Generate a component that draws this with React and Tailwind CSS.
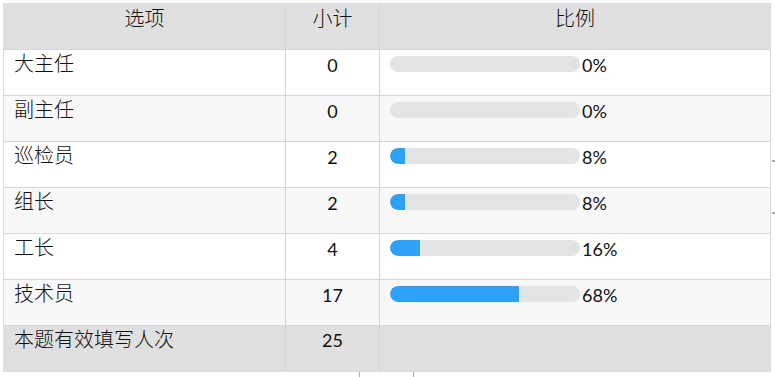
const rows = [
  { name: '大主任', count: 0, pct: 0 },
  { name: '副主任', count: 0, pct: 0 },
  { name: '巡检员', count: 2, pct: 8 },
  { name: '组长', count: 2, pct: 8 },
  { name: '工长', count: 4, pct: 16 },
  { name: '技术员', count: 17, pct: 68 },
]

const cjk = "font-['SimSun','Noto_Sans_CJK_SC',sans-serif] font-light"
const num = "font-['Lato','Liberation_Sans','Noto_Sans_CJK_SC',sans-serif]"

function Bar({ pct }) {
  return (
    <div className="flex items-start pt-[6px] pl-[10px]">
      <div className="w-[190px] h-[16px] rounded-full bg-[#e3e4e5] overflow-hidden">
        <div className="h-full bg-[#2ea1f8] rounded-l-full" style={{ width: `${pct}%` }} />
      </div>
      <span className={`${num} text-[18px] leading-[24px] text-[#111] -mt-[3px] ml-[2px]`}>{pct}%</span>
    </div>
  )
}

export default function App() {
  return (
    <div className="relative w-[775px] h-[377px] bg-white">
      <div className="ml-[3px] pt-[3px] w-[768px]">
        <div className="border border-[#dadada] text-[#111]">
          {/* header */}
          <div className="grid grid-cols-[282px_94px_1fr] h-[46px] bg-[#e0e0e0] border-b border-[#d4d4d4]">
            <div className={`${cjk} text-[20px] leading-[24px] pt-[2px] text-center border-r border-[#d4d4d4]`}>选项</div>
            <div className={`${cjk} text-[20px] leading-[24px] pt-[2px] text-center border-r border-[#d4d4d4]`}>小计</div>
            <div className={`${cjk} text-[20px] leading-[24px] pt-[2px] text-center`}>比例</div>
          </div>
          {rows.map((r, i) => (
            <div
              key={r.name}
              className={`grid grid-cols-[282px_94px_1fr] h-[46px] border-b border-[#d6d6d6] ${i % 2 === 1 ? 'bg-[#f8f8f8]' : 'bg-white'}`}
            >
              <div className={`${cjk} text-[20px] leading-[24px] pt-[1px] pl-[10px] border-r border-[#d6d6d6]`}>{r.name}</div>
              <div className={`${num} text-[18px] leading-[24px] pt-[3px] text-center border-r border-[#d6d6d6]`}>{r.count}</div>
              <Bar pct={r.pct} />
            </div>
          ))}
          {/* footer */}
          <div className="grid grid-cols-[282px_94px_1fr] h-[45px] bg-[#e0e0e0]">
            <div className={`${cjk} text-[20px] leading-[24px] pt-[1px] pl-[10px] border-r border-[#d4d4d4]`}>本题有效填写人次</div>
            <div className={`${num} text-[18px] leading-[24px] pt-[2px] text-center border-r border-[#d4d4d4]`}>25</div>
            <div />
          </div>
        </div>
      </div>
      {/* stray scrollbar fragments */}
      <div className="absolute left-[359px] top-[372px] w-[55px] h-[5px] border-x border-[#aaa]" />
      <div className="absolute left-[772px] top-[160px] w-[3px] h-[2px] bg-[#aaa]" />
      <div className="absolute left-[772px] top-[212px] w-[3px] h-[2px] bg-[#aaa]" />
    </div>
  )
}
